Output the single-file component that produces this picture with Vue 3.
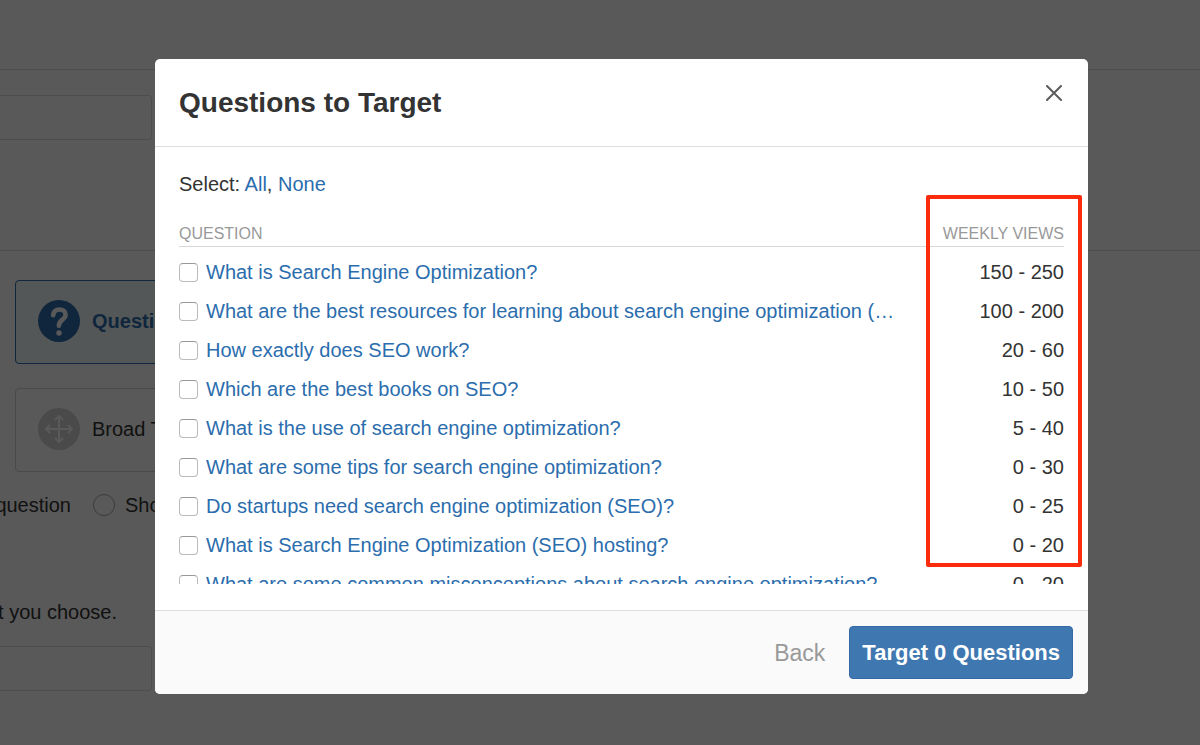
<script setup>
import { ref, computed } from 'vue'

const questions = ref([
  { text: 'What is Search Engine Optimization?', views: '150 - 250' },
  { text: 'What are the best resources for learning about search engine optimization (SEO)?', views: '100 - 200' },
  { text: 'How exactly does SEO work?', views: '20 - 60' },
  { text: 'Which are the best books on SEO?', views: '10 - 50' },
  { text: 'What is the use of search engine optimization?', views: '5 - 40' },
  { text: 'What are some tips for search engine optimization?', views: '0 - 30' },
  { text: 'Do startups need search engine optimization (SEO)?', views: '0 - 25' },
  { text: 'What is Search Engine Optimization (SEO) hosting?', views: '0 - 20' },
  { text: 'What are some common misconceptions about search engine optimization?', views: '0 - 20' },
].map((q) => ({ ...q, selected: false })))

const count = computed(() => questions.value.filter((q) => q.selected).length)
const selectAll = (value) => questions.value.forEach((q) => { q.selected = value })
</script>

<template>
  <div class="screen">
    <main class="page">
      <header class="topbar"></header>
      <section class="block name-block">
        <input class="field" type="text" aria-label="Ad set name" />
      </section>
      <section class="block target-block">
        <button class="option active" type="button">
          <svg class="option-icon" viewBox="0 0 42 42" aria-hidden="true">
            <circle cx="21" cy="21" r="21" fill="#2b6dad" />
            <path d="M15.2 15.2c.4-3.8 3-5.7 6.200-5.700 3.600 0 6.200 2 6.200 5.200 0 4.900-6.700 5.100-6.700 11" fill="none" stroke="#fff" stroke-width="4.6" stroke-linecap="round" />
            <circle cx="21" cy="33" r="2.7" fill="#fff" />
          </svg>
          <span>Questions</span>
        </button>
        <button class="option" type="button">
          <svg class="option-icon" viewBox="0 0 42 42" aria-hidden="true">
            <circle cx="21" cy="21" r="21" fill="#d4d4d4" />
            <path d="M21 8v26M8 21h26M17.5 11.500 21 8l3.500 3.500M17.500 30.500 21 34l3.500-3.500M11.500 17.500 8 21l3.500 3.500M30.500 17.500 34 21l-3.500 3.500" fill="none" stroke="#fff" stroke-width="2" stroke-linecap="round" stroke-linejoin="round" />
          </svg>
          <span>Broad Targeting</span>
        </button>
        <div class="choices">
          <span class="cut">question</span>
          <label class="choice"><input type="radio" name="match" />Show</label>
        </div>
        <p class="cut note">t you choose.</p>
        <input class="field" type="text" aria-label="Keywords" />
      </section>
    </main>

    <div class="overlay">
      <div class="modal" role="dialog" aria-labelledby="dialog-title">
        <header class="modal-head">
          <h1 id="dialog-title">Questions to Target</h1>
          <button class="close" type="button" aria-label="Close">
            <svg viewBox="0 0 16 16" aria-hidden="true">
              <path d="M1 1l14 14M15 1L1 15" fill="none" stroke="#5c5c5c" stroke-width="2" stroke-linecap="round" />
            </svg>
          </button>
        </header>

        <div class="modal-body">
          <p class="select">
            Select: <a href="#" @click.prevent="selectAll(true)">All</a>, <a href="#" @click.prevent="selectAll(false)">None</a>
          </p>
          <div class="list">
            <table>
              <thead>
                <tr>
                  <th class="question">QUESTION</th>
                  <th class="views">WEEKLY VIEWS</th>
                </tr>
              </thead>
              <tbody>
                <tr v-for="(q, i) in questions" :key="q.text">
                  <td class="question">
                    <div class="entry">
                      <input :id="`q${i}`" v-model="q.selected" type="checkbox" />
                      <label :for="`q${i}`">{{ q.text }}</label>
                    </div>
                  </td>
                  <td class="views">{{ q.views }}</td>
                </tr>
              </tbody>
            </table>
          </div>
          <div class="highlight"></div>
        </div>

        <footer class="modal-foot">
          <button class="back" type="button">Back</button>
          <button class="submit" type="button">Target {{ count }} Questions</button>
        </footer>
      </div>
    </div>
  </div>
</template>

<style>
body {
  margin: 0;
  background: #fff;
}
</style>

<style scoped>
* {
  box-sizing: border-box;
}

.screen {
  position: relative;
  min-height: 100vh;
  overflow: hidden;
  font-family: "Liberation Sans", Arial, sans-serif;
  font-size: 20px;
  line-height: 24px;
  color: #333;
}

button,
input {
  font: inherit;
  color: inherit;
  margin: 0;
}

.topbar {
  height: 70px;
  border-bottom: 1px solid #ddd;
}

.block {
  display: flex;
  flex-direction: column;
  align-items: flex-start;
}

.name-block {
  height: 181px;
  padding-top: 25px;
  border-bottom: 1px solid #ddd;
}

.target-block {
  padding-top: 29px;
}

.field {
  width: 152px;
  height: 45px;
  border: 1px solid #ddd;
  border-left: 0;
  border-radius: 0 4px 4px 0;
  background: transparent;
}

.option {
  display: flex;
  align-items: center;
  gap: 12px;
  width: 50%;
  height: 84px;
  margin: 0 0 24px 15px;
  padding: 0 22px 2px;
  border: 1px solid #d4d4d4;
  border-radius: 4px;
  background: transparent;
}

.option.active {
  border-color: #2b6dad;
  background: #f1f8fb;
  color: #2b6dad;
  font-weight: bold;
}

.option-icon {
  width: 42px;
  height: 42px;
}

.choices {
  display: flex;
  align-items: center;
  gap: 22px;
  margin-top: -3px;
}

.cut {
  display: flex;
  justify-content: flex-end;
  width: 71px;
  white-space: nowrap;
}

.choice {
  display: flex;
  align-items: center;
  gap: 10px;
}

.choice input {
  appearance: none;
  width: 22px;
  height: 22px;
  border: 1px solid #aaa;
  border-radius: 50%;
}

.note {
  width: 117px;
  margin: 83px 0 22px;
}

.overlay {
  position: absolute;
  inset: 0;
  padding: 59px 112px 51px 155px;
  background: rgba(0, 0, 0, 0.65);
}

.modal {
  overflow: hidden;
  border-radius: 5px;
  background: #fff;
}

.modal-head {
  display: flex;
  justify-content: space-between;
  padding: 25px 23px 24px 24px;
  border-bottom: 1px solid #ddd;
}

h1 {
  margin: 0;
  font-size: 28px;
  line-height: 38px;
  font-weight: bold;
}

.close {
  width: 22px;
  height: 18px;
  padding: 0 3px;
  border: 0;
  background: none;
}

.close svg {
  display: block;
  width: 16px;
  height: 16px;
}

.modal-body {
  position: relative;
  padding: 25px 24px 26px;
}

.select {
  margin: 0 0 24px;
}

a,
.entry label {
  color: #2b6dad;
  text-decoration: none;
}

.list {
  height: 364px;
  overflow: hidden;
}

table {
  width: 100%;
  border-collapse: collapse;
  table-layout: fixed;
}

th {
  height: 26px;
  padding: 2px 0 0;
  border-bottom: 1px solid #d8d8d8;
  color: #999;
  font-size: 16px;
  line-height: 22px;
  font-weight: normal;
  text-align: left;
}

tbody::before {
  content: "";
  display: block;
  height: 6px;
}

td {
  height: 39px;
  padding: 0;
}

.views {
  width: 160px;
  text-align: right;
}

.entry {
  display: flex;
  align-items: center;
  gap: 8px;
  padding-right: 4px;
}

.entry input {
  appearance: none;
  flex: none;
  width: 19px;
  height: 19px;
  border: 1px solid #bbb;
  border-top-color: #999;
  border-radius: 4px;
}

.entry label {
  overflow: hidden;
  white-space: nowrap;
  text-overflow: ellipsis;
}

.highlight {
  position: absolute;
  top: 48px;
  right: 6px;
  width: 156px;
  height: 372px;
  border: 4px solid #fb2b0b;
  border-radius: 2px;
  pointer-events: none;
}

.modal-foot {
  display: flex;
  align-items: center;
  justify-content: flex-end;
  gap: 24px;
  padding: 15px;
  border-top: 1px solid #ddd;
  background: #fafafa;
}

.back {
  padding: 0;
  border: 0;
  background: none;
  color: #999;
  font-size: 23px;
}

.submit {
  height: 53px;
  padding: 0 12px;
  border: 1px solid #3469a8;
  border-radius: 4px;
  background: #3f78b0;
  color: #fff;
  font-size: 22px;
  font-weight: bold;
}
</style>
